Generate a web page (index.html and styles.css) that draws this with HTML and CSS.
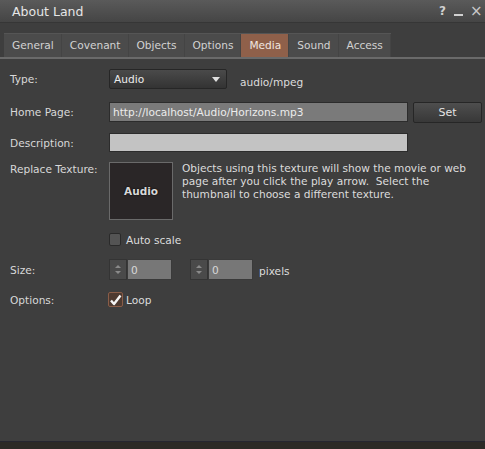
FILE: index.html
```html
<!DOCTYPE html>
<html lang="en">
<head>
    <meta charset="UTF-8">
    <link rel="stylesheet" href="styles.css">
</head>
<body>
    <div class="floater">
        <div class="title-bar">
            <div class="title">About Land</div>
            <div class="title-controls">
                <span class="tb-btn">?</span>
                <span class="tb-btn tb-min"></span>
                <span class="tb-btn tb-close">×</span>
            </div>
        </div>

        <div class="tab-row">
            <div class="tabs">
                <div class="tab">General</div>
                <div class="tab">Covenant</div>
                <div class="tab">Objects</div>
                <div class="tab">Options</div>
                <div class="tab active">Media</div>
                <div class="tab">Sound</div>
                <div class="tab">Access</div>
            </div>
        </div>

        <div class="panel">
            <div class="row row-type">
                <div class="label">Type:</div>
                <div class="combo">
                    <span>Audio</span>
                    <span class="combo-arrow"></span>
                </div>
                <div class="mime">audio/mpeg</div>
            </div>

            <div class="row row-url">
                <div class="label">Home Page:</div>
                <div class="field field-url">http://localhost/Audio/Horizons.mp3</div>
                <button class="btn">Set</button>
            </div>

            <div class="row row-desc">
                <div class="label">Description:</div>
                <div class="field field-desc"></div>
            </div>

            <div class="row row-texture">
                <div class="label">Replace Texture:</div>
                <div class="texture"><span>Audio</span></div>
                <div class="help">Objects using this texture will show the movie or web page after you click the play arrow.&nbsp; Select the thumbnail to choose a different texture.</div>
            </div>

            <div class="row row-auto">
                <div class="label"></div>
                <div class="check"></div>
                <div class="check-label">Auto scale</div>
            </div>

            <div class="row row-size">
                <div class="label">Size:</div>
                <div class="spinner">
                    <div class="spin-arrows"><span class="up"></span><span class="down"></span></div>
                    <div class="spin-field">0</div>
                </div>
                <div class="spinner">
                    <div class="spin-arrows"><span class="up"></span><span class="down"></span></div>
                    <div class="spin-field">0</div>
                </div>
                <div class="unit">pixels</div>
            </div>

            <div class="row row-options">
                <div class="label">Options:</div>
                <div class="check checked">
                    <svg width="13" height="12" viewBox="0 0 13 12"><path d="M2 6.5 L5 10 L11.5 1.5" fill="none" stroke="#f4f4f4" stroke-width="2.4" stroke-linejoin="round"/></svg>
                </div>
                <div class="check-label">Loop</div>
            </div>
        </div>

        <div class="footer"></div>
    </div>
</body>
</html>
```

FILE: styles.css
```css
html, body {
    margin: 0;
    padding: 0;
    height: 100%;
    background: #3e3e3e;
    font-family: "DejaVu Sans", sans-serif;
    font-size: 10.6px;
    color: #dcdcdc;
}

.floater {
    display: flex;
    flex-direction: column;
    height: 449px;
    width: 485px;
    overflow: hidden;
}

.title-bar {
    display: flex;
    align-items: center;
    height: 22px;
    padding: 0 6px 0 12px;
    background: linear-gradient(#5a5a5a, #454545);
    border-bottom: 1px solid #363636;
}

.title {
    font-size: 12.5px;
    color: #e6e6e6;
    margin-right: auto;
}

.title-controls {
    display: flex;
    gap: 7px;
    align-items: center;
}

.tb-btn {
    font-weight: bold;
    font-size: 12px;
    color: #d0d0d0;
    width: 9px;
    text-align: center;
}

.tb-min {
    height: 2px;
    background: #d0d0d0;
    margin-top: 8px;
}

.tb-close {
    font-weight: normal;
    font-size: 15px;
    color: #c8c8c8;
}

.tab-row {
    margin-top: 10px;
    padding-left: 4px;
    border-bottom: 2px solid #6a6a6a;
}

.tabs {
    display: inline-flex;
    background: #4b4b4b;
    border-top: 1px solid #555;
}

.tab {
    height: 23px;
    line-height: 23px;
    padding: 0 7px 0 8px;
    color: #d2d2d2;
    border-right: 1px solid #444;
}

.tab.active {
    background: #8f604a;
    color: #f0e6e0;
}

.panel {
    flex: 1;
    padding: 0 0 0 10px;
}

.row {
    display: flex;
    align-items: center;
}

.label {
    width: 99px;
    flex: none;
    color: #d8d8d8;
}

.row-type {
    margin-top: 10px;
    height: 20px;
}

.combo {
    width: 118px;
    height: 20px;
    box-sizing: border-box;
    border: 1px solid #262626;
    border-radius: 2px;
    background: linear-gradient(#4a4a4a, #333);
    display: flex;
    align-items: center;
    padding: 0 6px 0 4px;
    color: #ececec;
}

.combo span:first-child {
    margin-right: auto;
}

.combo-arrow {
    width: 0;
    height: 0;
    border-left: 4px solid transparent;
    border-right: 4px solid transparent;
    border-top: 5px solid #e0e0e0;
}

.mime {
    margin-left: 13px;
    padding-top: 5px;
}

.row-url {
    margin-top: 13px;
    height: 20px;
}

.field {
    height: 20px;
    box-sizing: border-box;
    border: 1px solid #2c2c2c;
}

.field-url {
    width: 299px;
    background: #7a7a7a;
    color: #ececec;
    padding: 3px 0 0 3px;
}

.btn {
    margin-left: 5px;
    width: 69px;
    height: 21px;
    border: 1px solid #262626;
    border-radius: 2px;
    background: linear-gradient(#4e4e4e, #383838);
    color: #e4e4e4;
    font-family: inherit;
    font-size: 11px;
    padding: 0;
}

.row-desc {
    margin-top: 11px;
    height: 19px;
}

.field-desc {
    width: 299px;
    height: 19px;
    background: #c3c3c3;
}

.row-texture {
    margin-top: 10px;
    align-items: flex-start;
}

.row-texture .label {
    padding-top: 1px;
}

.texture {
    width: 64px;
    height: 58px;
    box-sizing: border-box;
    border: 1px solid #6a6a6a;
    background: #2a2627;
    display: flex;
    align-items: center;
    justify-content: center;
    flex: none;
}

.texture span {
    font-weight: bold;
    font-size: 10.5px;
    color: #d8d8d8;
    text-shadow: 0 0 2px #000;
}

.help {
    margin-left: 9px;
    line-height: 13px;
    width: 295px;
}

.row-auto {
    margin-top: 13px;
    height: 13px;
}

.check {
    width: 12px;
    height: 13px;
    box-sizing: border-box;
    border: 1px solid #2a2a2a;
    background: #545454;
    border-radius: 2px;
    display: flex;
    align-items: center;
    justify-content: center;
}

.check-label {
    margin-left: 5px;
}

.row-size {
    margin-top: 13px;
    height: 21px;
}

.spinner {
    display: flex;
    height: 21px;
    margin-right: 18px;
}

.spin-arrows {
    width: 18px;
    box-sizing: border-box;
    border: 1px solid #343434;
    background: #4a4a4a;
    display: flex;
    flex-direction: column;
    align-items: center;
    justify-content: space-around;
    padding: 3px 0;
}

.spin-arrows span {
    width: 0;
    height: 0;
    border-left: 3px solid transparent;
    border-right: 3px solid transparent;
}

.spin-arrows .up {
    border-bottom: 3px solid #8a8a8a;
}

.spin-arrows .down {
    border-top: 3px solid #8a8a8a;
}

.spin-field {
    width: 45px;
    box-sizing: border-box;
    background: #777;
    border: 1px solid #3a3a3a;
    color: #d8d8d8;
    padding: 4px 0 0 3px;
}

.unit {
    margin-left: -12px;
    padding-top: 3px;
}

.row-options {
    margin-top: 12px;
    height: 15px;
}

.row-options .label {
    width: 98px;
}

.check.checked {
    width: 15px;
    height: 15px;
    border: 1px solid #8a5d48;
    background: #4e3a30;
}

.row-options .check-label {
    margin-left: 3px;
}

.footer {
    height: 7px;
    border-top: 1px solid #262630;
    background: #2c2a26;
}
```
